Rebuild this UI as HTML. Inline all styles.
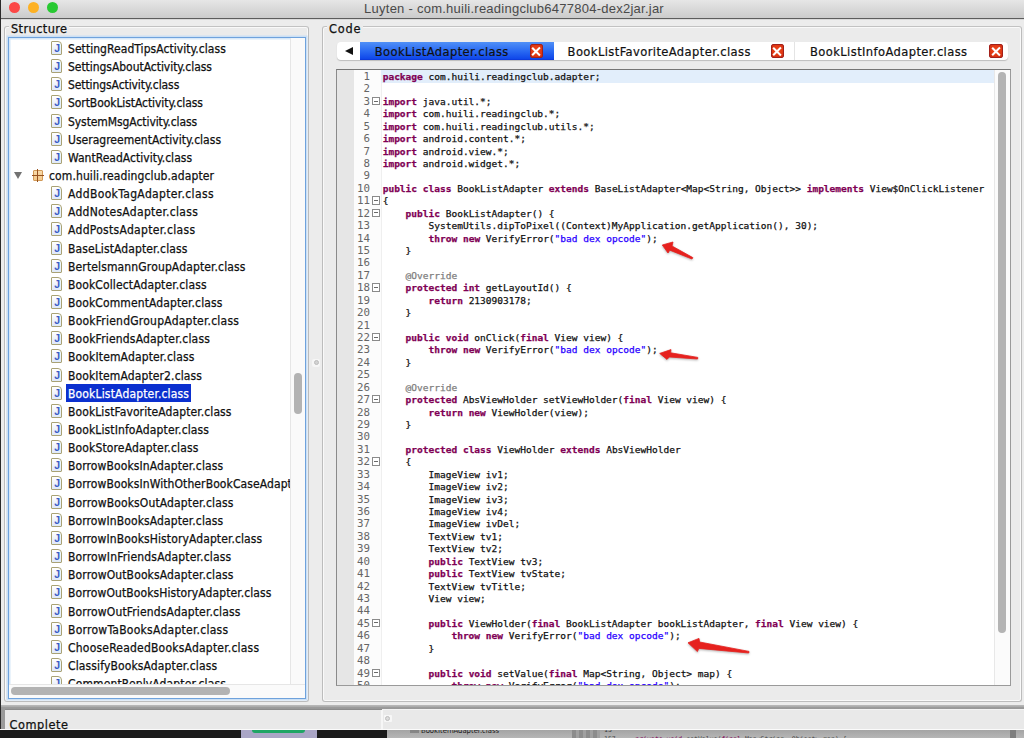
<!DOCTYPE html>
<html lang="en"><head><meta charset="utf-8"><title>Luyten - com.huili.readingclub6477804-dex2jar.jar</title>
<style>
*{box-sizing:border-box;margin:0;padding:0}
html,body{width:1024px;height:738px;overflow:hidden;background:#1b1b1b}
body{position:relative;font-family:"DejaVu Sans Condensed","Liberation Sans",sans-serif;font-size:12px;color:#111}
b,i,u,em{font-style:normal;font-weight:normal;text-decoration:none}
#desk{position:absolute;left:0;top:729px;width:1024px;height:9px;background:#1b1b1b;overflow:hidden}
#desk .a{position:absolute;left:241px;top:0;width:76px;height:9px;background:#aaa6c6}
#desk .b{position:absolute;left:252px;top:0;width:53px;height:4px;background:#1fa565;border-radius:0 0 3px 3px}
#desk .c{position:absolute;left:387px;top:0;width:637px;height:9px;background:linear-gradient(#a2a2a2,#b6b6b6)}
#desk .d{position:absolute;left:421px;top:-3px;font-size:7.6px;line-height:10px;color:#1a1a1a;white-space:pre}
#desk .e{position:absolute;left:604px;top:-4px;font-family:"DejaVu Sans Mono",monospace;font-size:6.5px;line-height:10px;color:#3a3a3a;white-space:pre}
#desk .f{position:absolute;left:572px;top:0;width:28px;height:9px;background:repeating-linear-gradient(90deg,#8c8c8c 0,#8c8c8c 4px,#a0a0a0 4px,#a0a0a0 7px)}
#desk .g{position:absolute;left:1010px;top:0;width:6px;height:9px;background:#7e7e7e}
#desk .h{position:absolute;left:410px;top:0;width:9px;height:4px;background:#6e6e6e;opacity:.6}
#desk .k{position:absolute;left:604px;top:5.5px;font-family:"DejaVu Sans Mono",monospace;font-size:6.5px;line-height:8px;color:#444;white-space:pre}
#desk .k b{color:#7f0055}
#win{position:absolute;left:0;top:0;width:1024px;height:729.5px;background:#ececec;overflow:hidden}
#ledge{position:absolute;left:0;top:0;width:1px;height:729px;background:#2a2a2a;z-index:5}
#titlebar{position:absolute;left:0;top:0;width:1024px;height:19px;background:linear-gradient(#e6e6e6,#cbcbcb);border-bottom:1px solid #5c5c5c;box-shadow:0 1px 0 #d9d9d9}
.tl{position:absolute;top:1.9px;width:11.6px;height:11.6px;border-radius:50%}
.tl.r{left:8.7px;background:#fc4846}
.tl.y{left:27.9px;background:#fdb124}
.tl.g{left:46.9px;background:#28c932}
#title{position:absolute;left:2px;top:0;width:1024px;text-align:center;font-family:"Liberation Sans",sans-serif;font-size:13px;letter-spacing:0.25px;line-height:17px;color:#4a4a4a;white-space:pre}
.gb{position:absolute;top:26px;height:676px;border:1px solid #bcbcbc;border-top-color:#c2c2c2;border-radius:3px;background:#ebebeb;box-shadow:inset 0 0 0 1px #f9f9f9}
#gbS{left:4px;width:305px}
#gbC{left:322px;width:700px}
.gbt{position:absolute;left:4px;top:-6px;padding:0 2px 0 2px;background:#ebebeb;font-size:12.6px;letter-spacing:0.2px;line-height:16px;-webkit-text-stroke:0.25px currentColor;color:#111;white-space:pre}
#tree{position:absolute;left:8px;top:37px;width:298px;height:662px;background:#fff;border:1px solid #6fa2dc;box-shadow:0 0 0 1.5px #cbe0f5, inset 0 0 0 1.5px #d6e7f8;overflow:hidden}
#treeIn{position:absolute;left:0;top:0;width:281px;height:646px;overflow:hidden}
.row{position:absolute;left:0;height:18px;line-height:18px;white-space:pre;font-size:12px;letter-spacing:0.07px}
.row .tx{position:absolute;left:57px;top:0;padding:0 2px;-webkit-text-stroke:0.25px currentColor}
.row.pkg .tx{left:38px}
.row .tx.sel{background:#0b30cf;color:#fff;height:18px;top:-1px;padding-top:1px;line-height:18px}
.ic{position:absolute;left:42px;top:1px;width:11px;height:14px;border:1px solid #a9a274;background:linear-gradient(#fff,#dfe9f8);border-radius:1px 4px 1px 1px}
.ic em{position:absolute;left:2.2px;top:1px;font-size:10.5px;line-height:11px;font-weight:bold;color:#3b5cc4;font-family:"Liberation Sans",sans-serif}
.tw{position:absolute;left:5.4px;top:4.5px;width:0;height:0;border-left:4px solid transparent;border-right:4px solid transparent;border-top:7px solid #727272}
.ip{position:absolute;left:23.6px;top:3px;width:10.4px;height:10.8px;border:1px solid #d29a57;background:linear-gradient(#f9dcab,#f3c98b);border-radius:1px}
.ip:before{content:"";position:absolute;left:3.7px;top:-2px;width:1px;height:12.6px;background:#96521f}
.ip:after{content:"";position:absolute;left:-2px;top:3.9px;width:12.4px;height:1px;background:#96521f}
#tvs{position:absolute;left:281px;top:0;width:15px;height:646px;background:#fafafa;border-left:1px solid #e6e6e6}
#tvs .thumb{position:absolute;left:3px;top:335px;width:8px;height:41px;border-radius:4px;background:#b3b3b3}
#ths{position:absolute;left:0;top:646px;width:296px;height:14px;background:#fafafa;border-top:1px solid #e6e6e6}
#ths .thumb{position:absolute;left:2px;top:2px;width:219px;height:8px;border-radius:4px;background:#b3b3b3}
#dot{position:absolute;left:312px;top:359px;width:8px;height:8px;border-radius:2px;background:#f6f6f6}
#dot:after{content:"";position:absolute;left:1.6px;top:1.2px;width:3px;height:3px;border-radius:50%;background:#d2d2d2;border:1px solid #bcbcbc}
#tabs{position:absolute;left:337px;top:42px;width:671px;height:18px;background:#fff;border-radius:4px;box-shadow:0 1px 1px #bdbdbd;overflow:hidden}
.tab{position:absolute;top:0;height:18px;font-size:12.8px;letter-spacing:0.41px;line-height:17px;white-space:pre;color:#111}
.tab.arrow{left:0;width:23.2px}
.tri{position:absolute;left:7.8px;top:4.6px;width:0;height:0;border-top:4.4px solid transparent;border-bottom:4.4px solid transparent;border-right:8.4px solid #111}
.tab.t1{left:23.2px;width:193.4px;background:linear-gradient(#5090f7,#2a6af2 50%,#1048ea 92%,#0a34d6)}
.tab.t2{left:216.6px;width:241.9px;border-right:1px solid #e4e4e4}
.tab.t3{left:458.5px;width:213.5px}
.tab .tt{position:absolute;top:1px;-webkit-text-stroke:0.2px currentColor}
.tab.t1 .tt{left:14.5px}
.tab.t2 .tt{left:14px}
.tab.t3 .tt{left:14.5px}
.cx{position:absolute;top:2.4px;right:10.4px;width:13.4px;height:13.4px;border-radius:2px;background:radial-gradient(circle at 50% 45%,#f0481c,#e23a14 55%,#c92a12);border:1px solid #a3201a}
.cx:before,.cx:after{content:"";position:absolute;left:4.5px;top:0.2px;width:2.4px;height:11px;background:#fff;transform:rotate(45deg)}
.cx:after{transform:rotate(-45deg)}
#ed{position:absolute;left:336px;top:69px;width:675px;height:617px;background:#fff;border:1px solid #9a9a9a;border-top-color:#757575;border-left-color:#8a8a8a;overflow:hidden}
#icons{position:absolute;left:0;top:0;width:17px;height:615px;background:#e6e6e6}
#gut{position:absolute;left:17px;top:0;width:28px;height:615px;background:#fcfcfc;border-right:1px solid #efefef}
#hl{position:absolute;left:44px;top:0;width:613px;height:12.5px;background:#e2eefb}
.ln{position:absolute;left:0;height:13px;white-space:pre;font-family:"DejaVu Sans Mono","Liberation Mono",monospace;font-size:9.53px;line-height:13px;color:#111}
.no{position:absolute;left:0;top:0;width:33px;text-align:right;font-size:10.8px;line-height:13px;color:#666}
.fd{position:absolute;left:35px;top:2px;width:8.4px;height:8.4px;border:1px solid #8a8a8a;background:#fff}
.fd:after{content:"";position:absolute;left:1.2px;top:2.7px;width:4px;height:1px;background:#6a6a6a}
.cd{position:absolute;left:45.7px;top:0;-webkit-text-stroke:0.25px currentColor}
.cd b{font-weight:bold;color:#7f0055}
.cd i{color:#2a00ff}
.cd u{color:#808080}
#evs{position:absolute;left:657px;top:0;width:16px;height:615px;background:#fbfbfb;border-left:1px solid #e8e8e8}
#evs .thumb{position:absolute;left:3.2px;top:2px;width:7.5px;height:561px;border-radius:4px;background:#b4b4b4}
#arrows{position:absolute;left:-337px;top:-70px;filter:drop-shadow(0 1px 1px rgba(0,0,0,.3))}
.ar{fill:#e6211e;stroke:#e6211e;stroke-width:0.8;stroke-linejoin:round}
#sep{position:absolute;left:0;top:705px;width:1024px;height:4px;background:linear-gradient(#b8b8b8,#b2b2b2 35%,#9c9c9c 45%,#989898)}
#sep2{position:absolute;left:0;top:709px;width:381.5px;height:1.4px;background:#8c8c8c;z-index:2}
#lbev{position:absolute;left:1px;top:707px;width:3.6px;height:22px;background:#9a9a9a;z-index:3}
#status{position:absolute;left:0;top:709px;width:1024px;height:20.5px;background:linear-gradient(#f3f3f3,#f3f3f3 1px,#e9e9e9 1.2px);border-bottom:1.5px solid #fbfbfb}
#stv{position:absolute;left:380.5px;top:1px;width:2px;height:19px;background:#f6f6f6}
#stt{position:absolute;left:9.5px;top:8px;-webkit-text-stroke:0.25px currentColor;font-size:12.6px;letter-spacing:0.55px;line-height:16px;color:#111}
#stdot{position:absolute;left:383.7px;top:6px;width:8.3px;height:7.4px;background:#f7f7f7;border-radius:1px}
#stdot:after{content:"";position:absolute;left:1.2px;top:0.6px;width:3.4px;height:3.4px;border-radius:50%;border:1.3px solid #bdbdbd;background:#dcdcdc}
.tab.t3 .cx{right:6.2px}
#gbS .gbt{letter-spacing:0.42px}
#gbC .gbt{letter-spacing:0.8px}

</style></head>
<body>
<div id="desk"><div class="a"></div><div class="b"></div><div class="c"></div><div class="f"></div><div class="g"></div><div class="h"></div><div class="d">BookItemAdapter.class</div><div class="e">15</div><div class="k">157     <b>private void</b> setValue(<b>final</b> Map&lt;String, Object&gt; map) {</div></div>
<div id="win">
<div id="ledge"></div>
<div id="titlebar"><span class="tl r"></span><span class="tl y"></span><span class="tl g"></span><div id="title">Luyten - com.huili.readingclub6477804-dex2jar.jar</div></div>
<div class="gb" id="gbS"><div class="gbline"></div><span class="gbt">Structure</span></div>
<div id="tree"><div id="treeIn">
<div class="row" style="top:2.00px"><span class="ic"><em>J</em></span><span class="tx" style="letter-spacing:0.053px">SettingReadTipsActivity.class</span></div>
<div class="row" style="top:20.14px"><span class="ic"><em>J</em></span><span class="tx" style="letter-spacing:-0.041px">SettingsAboutActivity.class</span></div>
<div class="row" style="top:38.29px"><span class="ic"><em>J</em></span><span class="tx" style="letter-spacing:-0.089px">SettingsActivity.class</span></div>
<div class="row" style="top:56.44px"><span class="ic"><em>J</em></span><span class="tx" style="letter-spacing:-0.072px">SortBookListActivity.class</span></div>
<div class="row" style="top:74.58px"><span class="ic"><em>J</em></span><span class="tx" style="letter-spacing:-0.078px">SystemMsgActivity.class</span></div>
<div class="row" style="top:92.72px"><span class="ic"><em>J</em></span><span class="tx" style="letter-spacing:0.014px">UseragreementActivity.class</span></div>
<div class="row" style="top:110.87px"><span class="ic"><em>J</em></span><span class="tx" style="letter-spacing:0.025px">WantReadActivity.class</span></div>
<div class="row pkg" style="top:129.01px"><span class="tw"></span><span class="ip"></span><span class="tx" style="letter-spacing:0.111px">com.huili.readingclub.adapter</span></div>
<div class="row" style="top:147.16px"><span class="ic"><em>J</em></span><span class="tx" style="letter-spacing:0.353px">AddBookTagAdapter.class</span></div>
<div class="row" style="top:165.31px"><span class="ic"><em>J</em></span><span class="tx" style="letter-spacing:0.289px">AddNotesAdapter.class</span></div>
<div class="row" style="top:183.45px"><span class="ic"><em>J</em></span><span class="tx" style="letter-spacing:0.303px">AddPostsAdapter.class</span></div>
<div class="row" style="top:201.59px"><span class="ic"><em>J</em></span><span class="tx" style="letter-spacing:0.113px">BaseListAdapter.class</span></div>
<div class="row" style="top:219.74px"><span class="ic"><em>J</em></span><span class="tx" style="letter-spacing:0.139px">BertelsmannGroupAdapter.class</span></div>
<div class="row" style="top:237.88px"><span class="ic"><em>J</em></span><span class="tx" style="letter-spacing:0.120px">BookCollectAdapter.class</span></div>
<div class="row" style="top:256.03px"><span class="ic"><em>J</em></span><span class="tx" style="letter-spacing:0.116px">BookCommentAdapter.class</span></div>
<div class="row" style="top:274.18px"><span class="ic"><em>J</em></span><span class="tx" style="letter-spacing:0.227px">BookFriendGroupAdapter.class</span></div>
<div class="row" style="top:292.32px"><span class="ic"><em>J</em></span><span class="tx" style="letter-spacing:0.187px">BookFriendsAdapter.class</span></div>
<div class="row" style="top:310.46px"><span class="ic"><em>J</em></span><span class="tx" style="letter-spacing:0.146px">BookItemAdapter.class</span></div>
<div class="row" style="top:328.61px"><span class="ic"><em>J</em></span><span class="tx" style="letter-spacing:0.125px">BookItemAdapter2.class</span></div>
<div class="row" style="top:346.75px"><span class="ic"><em>J</em></span><span class="tx sel" style="letter-spacing:0.165px">BookListAdapter.class</span></div>
<div class="row" style="top:364.90px"><span class="ic"><em>J</em></span><span class="tx" style="letter-spacing:0.098px">BookListFavoriteAdapter.class</span></div>
<div class="row" style="top:383.05px"><span class="ic"><em>J</em></span><span class="tx" style="letter-spacing:0.118px">BookListInfoAdapter.class</span></div>
<div class="row" style="top:401.19px"><span class="ic"><em>J</em></span><span class="tx" style="letter-spacing:0.143px">BookStoreAdapter.class</span></div>
<div class="row" style="top:419.33px"><span class="ic"><em>J</em></span><span class="tx" style="letter-spacing:0.112px">BorrowBooksInAdapter.class</span></div>
<div class="row" style="top:437.48px"><span class="ic"><em>J</em></span><span class="tx" style="letter-spacing:0.098px">BorrowBooksInWithOtherBookCaseAdapter.class</span></div>
<div class="row" style="top:455.62px"><span class="ic"><em>J</em></span><span class="tx" style="letter-spacing:0.133px">BorrowBooksOutAdapter.class</span></div>
<div class="row" style="top:473.77px"><span class="ic"><em>J</em></span><span class="tx" style="letter-spacing:0.112px">BorrowInBooksAdapter.class</span></div>
<div class="row" style="top:491.91px"><span class="ic"><em>J</em></span><span class="tx" style="letter-spacing:0.109px">BorrowInBooksHistoryAdapter.class</span></div>
<div class="row" style="top:510.06px"><span class="ic"><em>J</em></span><span class="tx" style="letter-spacing:0.170px">BorrowInFriendsAdapter.class</span></div>
<div class="row" style="top:528.21px"><span class="ic"><em>J</em></span><span class="tx" style="letter-spacing:0.133px">BorrowOutBooksAdapter.class</span></div>
<div class="row" style="top:546.35px"><span class="ic"><em>J</em></span><span class="tx" style="letter-spacing:0.096px">BorrowOutBooksHistoryAdapter.class</span></div>
<div class="row" style="top:564.50px"><span class="ic"><em>J</em></span><span class="tx" style="letter-spacing:0.153px">BorrowOutFriendsAdapter.class</span></div>
<div class="row" style="top:582.64px"><span class="ic"><em>J</em></span><span class="tx" style="letter-spacing:0.266px">BorrowTaBooksAdapter.class</span></div>
<div class="row" style="top:600.78px"><span class="ic"><em>J</em></span><span class="tx" style="letter-spacing:0.213px">ChooseReadedBooksAdapter.class</span></div>
<div class="row" style="top:618.93px"><span class="ic"><em>J</em></span><span class="tx" style="letter-spacing:0.128px">ClassifyBooksAdapter.class</span></div>
<div class="row" style="top:637.07px"><span class="ic"><em>J</em></span><span class="tx" style="letter-spacing:0.130px">CommentReplyAdapter.class</span></div>
</div><div id="tvs"><div class="thumb"></div></div><div id="ths"><div class="thumb"></div></div></div>
<div id="dot"></div>
<div class="gb" id="gbC"><div class="gbline"></div><span class="gbt">Code</span></div>
<div id="tabs"><div class="tab arrow"><span class="tri"></span></div><div class="tab t1 active"><span class="tt">BookListAdapter.class</span><span class="cx"></span></div><div class="tab t2"><span class="tt">BookListFavoriteAdapter.class</span><span class="cx"></span></div><div class="tab t3"><span class="tt">BookListInfoAdapter.class</span><span class="cx"></span></div></div>
<div id="ed"><div id="icons"></div><div id="gut"></div><div id="hl"></div><div id="lines">
<div class="ln" style="top:0.00px"><span class="no">1</span><span class="cd"><b>package</b> com.huili.readingclub.adapter;</span></div>
<div class="ln" style="top:12.43px"><span class="no">2</span><span class="cd"></span></div>
<div class="ln" style="top:24.85px"><span class="no">3</span><span class="fd"></span><span class="cd"><b>import</b> java.util.*;</span></div>
<div class="ln" style="top:37.28px"><span class="no">4</span><span class="cd"><b>import</b> com.huili.readingclub.*;</span></div>
<div class="ln" style="top:49.71px"><span class="no">5</span><span class="cd"><b>import</b> com.huili.readingclub.utils.*;</span></div>
<div class="ln" style="top:62.13px"><span class="no">6</span><span class="cd"><b>import</b> android.content.*;</span></div>
<div class="ln" style="top:74.56px"><span class="no">7</span><span class="cd"><b>import</b> android.view.*;</span></div>
<div class="ln" style="top:86.99px"><span class="no">8</span><span class="cd"><b>import</b> android.widget.*;</span></div>
<div class="ln" style="top:99.42px"><span class="no">9</span><span class="cd"></span></div>
<div class="ln" style="top:111.84px"><span class="no">10</span><span class="cd"><b>public</b> <b>class</b> BookListAdapter <b>extends</b> BaseListAdapter&lt;Map&lt;String, Object&gt;&gt; <b>implements</b> View$OnClickListener</span></div>
<div class="ln" style="top:124.27px"><span class="no">11</span><span class="fd"></span><span class="cd">{</span></div>
<div class="ln" style="top:136.70px"><span class="no">12</span><span class="fd"></span><span class="cd">    <b>public</b> BookListAdapter() {</span></div>
<div class="ln" style="top:149.12px"><span class="no">13</span><span class="cd">        SystemUtils.dipToPixel((Context)MyApplication.getApplication(), 30);</span></div>
<div class="ln" style="top:161.55px"><span class="no">14</span><span class="cd">        <b>throw</b> <b>new</b> VerifyError(<i>&quot;bad dex opcode&quot;</i>);</span></div>
<div class="ln" style="top:173.98px"><span class="no">15</span><span class="cd">    }</span></div>
<div class="ln" style="top:186.41px"><span class="no">16</span><span class="cd"></span></div>
<div class="ln" style="top:198.83px"><span class="no">17</span><span class="cd">    <u>@Override</u></span></div>
<div class="ln" style="top:211.26px"><span class="no">18</span><span class="fd"></span><span class="cd">    <b>protected</b> <b>int</b> getLayoutId() {</span></div>
<div class="ln" style="top:223.69px"><span class="no">19</span><span class="cd">        <b>return</b> 2130903178;</span></div>
<div class="ln" style="top:236.11px"><span class="no">20</span><span class="cd">    }</span></div>
<div class="ln" style="top:248.54px"><span class="no">21</span><span class="cd"></span></div>
<div class="ln" style="top:260.97px"><span class="no">22</span><span class="fd"></span><span class="cd">    <b>public</b> <b>void</b> onClick(<b>final</b> View view) {</span></div>
<div class="ln" style="top:273.39px"><span class="no">23</span><span class="cd">        <b>throw</b> <b>new</b> VerifyError(<i>&quot;bad dex opcode&quot;</i>);</span></div>
<div class="ln" style="top:285.82px"><span class="no">24</span><span class="cd">    }</span></div>
<div class="ln" style="top:298.25px"><span class="no">25</span><span class="cd"></span></div>
<div class="ln" style="top:310.68px"><span class="no">26</span><span class="cd">    <u>@Override</u></span></div>
<div class="ln" style="top:323.10px"><span class="no">27</span><span class="fd"></span><span class="cd">    <b>protected</b> AbsViewHolder setViewHolder(<b>final</b> View view) {</span></div>
<div class="ln" style="top:335.53px"><span class="no">28</span><span class="cd">        <b>return</b> <b>new</b> ViewHolder(view);</span></div>
<div class="ln" style="top:347.96px"><span class="no">29</span><span class="cd">    }</span></div>
<div class="ln" style="top:360.38px"><span class="no">30</span><span class="cd"></span></div>
<div class="ln" style="top:372.81px"><span class="no">31</span><span class="cd">    <b>protected</b> <b>class</b> ViewHolder <b>extends</b> AbsViewHolder</span></div>
<div class="ln" style="top:385.24px"><span class="no">32</span><span class="fd"></span><span class="cd">    {</span></div>
<div class="ln" style="top:397.66px"><span class="no">33</span><span class="cd">        ImageView iv1;</span></div>
<div class="ln" style="top:410.09px"><span class="no">34</span><span class="cd">        ImageView iv2;</span></div>
<div class="ln" style="top:422.52px"><span class="no">35</span><span class="cd">        ImageView iv3;</span></div>
<div class="ln" style="top:434.94px"><span class="no">36</span><span class="cd">        ImageView iv4;</span></div>
<div class="ln" style="top:447.37px"><span class="no">37</span><span class="cd">        ImageView ivDel;</span></div>
<div class="ln" style="top:459.80px"><span class="no">38</span><span class="cd">        TextView tv1;</span></div>
<div class="ln" style="top:472.23px"><span class="no">39</span><span class="cd">        TextView tv2;</span></div>
<div class="ln" style="top:484.65px"><span class="no">40</span><span class="cd">        <b>public</b> TextView tv3;</span></div>
<div class="ln" style="top:497.08px"><span class="no">41</span><span class="cd">        <b>public</b> TextView tvState;</span></div>
<div class="ln" style="top:509.51px"><span class="no">42</span><span class="cd">        TextView tvTitle;</span></div>
<div class="ln" style="top:521.93px"><span class="no">43</span><span class="cd">        View view;</span></div>
<div class="ln" style="top:534.36px"><span class="no">44</span><span class="cd"></span></div>
<div class="ln" style="top:546.79px"><span class="no">45</span><span class="fd"></span><span class="cd">        <b>public</b> ViewHolder(<b>final</b> BookListAdapter bookListAdapter, <b>final</b> View view) {</span></div>
<div class="ln" style="top:559.22px"><span class="no">46</span><span class="cd">            <b>throw</b> <b>new</b> VerifyError(<i>&quot;bad dex opcode&quot;</i>);</span></div>
<div class="ln" style="top:571.64px"><span class="no">47</span><span class="cd">        }</span></div>
<div class="ln" style="top:584.07px"><span class="no">48</span><span class="cd"></span></div>
<div class="ln" style="top:596.50px"><span class="no">49</span><span class="fd"></span><span class="cd">        <b>public</b> <b>void</b> setValue(<b>final</b> Map&lt;String, Object&gt; map) {</span></div>
<div class="ln" style="top:608.92px"><span class="no">50</span><span class="cd">            <b>throw</b> <b>new</b> VerifyError(<i>&quot;bad dex opcode&quot;</i>);</span></div>
</div>
<div id="evs"><div class="thumb"></div></div>
<svg id="arrows" width="1024" height="729" viewBox="0 0 1024 729">
<polygon class="ar" points="662.3,245 673,242 672,246 692.8,257.6 692,259 669.8,250.2 668,253"/>
<polygon class="ar" points="659.7,353.4 671,349.6 670.6,352.8 697.8,357.4 697.6,359 669.4,357 667,359.4"/>
<polygon class="ar" points="688,642.8 699,638.4 699.6,642 749,651.4 748.8,653 698.8,648.4 697.4,651.6"/>
</svg>
</div>
<div id="sep"></div><div id="sep2"></div><div id="lbev"></div>
<div id="status"><span id="stt">Complete</span><span id="stv"></span><span id="stdot"></span></div>
</div>
</body></html>
